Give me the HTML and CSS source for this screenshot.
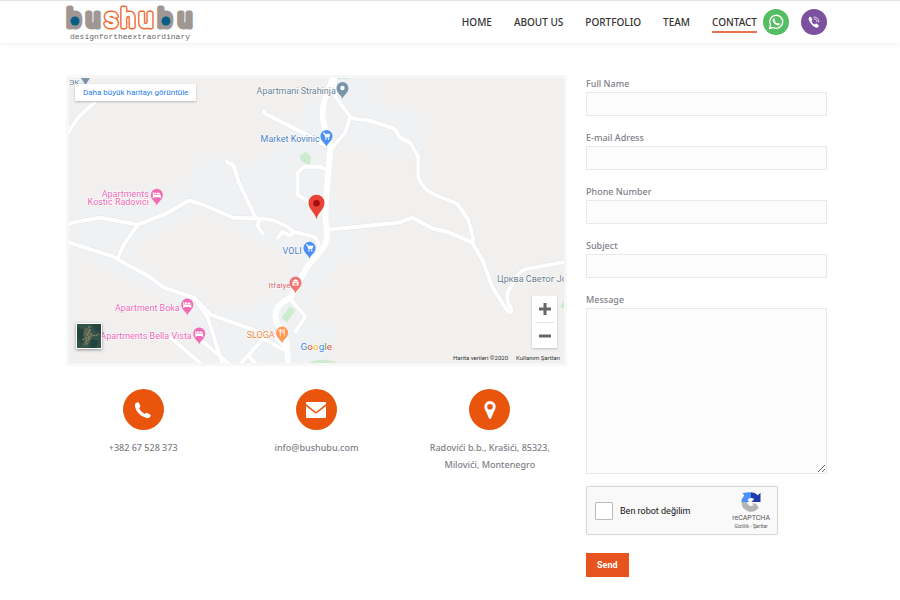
FILE: index.html
```html
<!DOCTYPE html>
<html lang="en">
<head>
<meta charset="utf-8">
<meta name="viewport" content="width=device-width, initial-scale=1">
<title>Contact - bushubu</title>
<link rel="stylesheet" href="styles.css">
</head>
<body>
<header class="site-header">
  <a class="logo" href="#" aria-label="bushubu">
    <svg viewBox="0 0 130 42" width="130" height="42">
      <g class="wordmark">
        <text class="wm-solid" y="26"><tspan x="1">b</tspan><tspan x="20">u</tspan></text>
        <text class="wm-outer" y="26"><tspan x="39">s</tspan><tspan x="55">h</tspan><tspan x="73">u</tspan></text>
        <text class="wm-inner" y="26"><tspan x="39">s</tspan><tspan x="55">h</tspan><tspan x="73">u</tspan></text>
        <text class="wm-solid" y="26"><tspan x="92">b</tspan><tspan x="112">u</tspan></text>
      </g>
      <circle cx="9" cy="20" r="4.500" fill="#075f86"/>
      <circle cx="100" cy="20" r="4.500" fill="#075f86"/>
      <text class="tagline" x="64" y="38" text-anchor="middle">designfortheextraordinary</text>
    </svg>
  </a>
  <nav class="nav">
    <a href="#">HOME</a>
    <a href="#">ABOUT US</a>
    <a href="#">PORTFOLIO</a>
    <a href="#">TEAM</a>
    <a class="active" href="#">CONTACT</a>
  </nav>
  <div class="social">
    <a href="#" aria-label="WhatsApp">
      <svg viewBox="0 0 26 26" width="26" height="26">
        <circle cx="13" cy="13" r="13" fill="#55bd62"/>
        <path d="M6.5 19.6l1-3.7a6.5 6.5 0 1 1 2.6 2.6z" fill="none" stroke="#fff" stroke-width="1.4" stroke-linejoin="round"/>
        <path d="M10.8 9.4c.5-.3.8 0 1 .5l.4 1c.1.4-.3.8-.6 1.2.7 1.2 1.500 1.900 2.700 2.400.4-.4.7-.9 1.100-.7l1.300.7c.4.3.1 1.200-.4 1.600-1.200.9-3.100.1-4.700-1.300-1.500-1.500-2.500-3.200-1.800-4.500.2-.4.6-.8 1-.9z" fill="#fff"/>
      </svg>
    </a>
    <a href="#" aria-label="Viber">
      <svg viewBox="0 0 26 26" width="26" height="26">
        <circle cx="13" cy="13" r="13" fill="#7d519f"/>
        <path d="M8.300 8.200c.8-.7 1.300-.5 1.900.3l1.100 1.600c.4.7 0 1.200-.7 1.800.4 1.700 1.500 2.900 3.200 3.500.6-.8 1.200-1 1.900-.6l1.600 1.100c.7.5.7 1.100.1 1.800-.8 1-1.600 1.200-2.700.7-3.200-1.500-5.400-4-6.700-7.200-.5-1.200-.5-2.200.3-3z" fill="#fff"/>
        <path d="M13 8c2.900 0 4.800 2 4.900 4.900M13.300 9.900c1.700.1 2.600 1.100 2.700 2.700" fill="none" stroke="#fff" stroke-width=".8" stroke-linecap="round"/>
      </svg>
    </a>
  </div>
</header>

<main class="page">
  <section class="info">
    <div class="map">
      <svg class="map-canvas" viewBox="68 78 496 286" preserveAspectRatio="xMidYMid slice">
        <defs>
          <path id="pin" d="M0 9C-1 5-6 3.500-6-2a6 6 0 0 1 12 0C6 3.500 1 5 0 9z"/>
          <g id="bed" fill="#fff"><path d="M-4-4.500h1v2.500h7v3.500h-1v-1h-6v1h-1z"/><path d="M-2.500-4h2.200v1.500h-2.200zM.2-4H2.500l1 1.500H.2z"/></g>
          <g id="cart"><path d="M-3.500-5h1.300l1.200 4.300h3.400l1.200-3h-5.300z" fill="#fff" stroke="#fff" stroke-width=".7"/><circle cx="-.6" cy="1" r=".8" fill="#fff"/><circle cx="2.200" cy="1" r=".8" fill="#fff"/></g>
          <g id="roads">
            <path class="wide" d="M333 76C329 90 323 96 322 113C322 127 330 140 330 147C329 165 325 193 325 220C327 233 328 239 323 248L307 267L290 298C279 304 275 308 275 316C274 328 286 331 286 345L288 366"/>
            <path d="M335 76L335 97L350 117C356 121 364 119 370 121L392 128C398 131 396 135 400 138L410 143L418 157L418 177C421 186 427 192 437 196L457 204L468 220L473 238L472 243"/>
            <path d="M350 117L345 132L332 148"/>
            <path d="M327 230L398 223L412 218L433 229L447 232L472 243L483 262L492 287L507 311Q512 315 511 309C506 302 507 297 508 292L517 277Q519 271 528 269L567 262"/>
            <path d="M263 111L265 114L307 135L325 146"/>
            <path d="M327 171L320 167L303 167L297 173L297 195L308 202"/>
            <path d="M226 162L233 166L238 182L255 218"/>
            <path d="M66 225L75 222L100 218L137 225L163 215L188 201L200 204L233 218L263 219L274 221L287 227L293 232L313 237Q321 243 317 253"/>
            <path d="M259 219L257 226L262 234M277 238L282 232L289 236L294 232"/>
            <path d="M66 242L112 257L150 278L163 288L193 298L210 315L243 327L274 337L284 347"/>
            <path d="M137 225L123 245L117 258M194 299L207 318L222 365"/>
            <path d="M170 338L202 366M202 342L230 366M240 364L264 338M247 356L257 366M263 339L282 350"/>
            <path d="M290 300L305 317L295 332M66 134L77 118L94 102"/>
          </g>
        </defs>
        <path class="land" d="M60 70h520v310H60z"/>
        <g class="plain">
          <path d="M66 203C120 220 190 196 195 164L201 155L226 155L240 166L270 151L298 125L318 76H378L380 105H412L430 130L418 158H385L365 145L340 150L332 163L330 190L348 215L365 235L363 258L340 262L312 295V312L338 333L320 366H66z"/>
        </g>
        <g class="land">
          <path d="M132 258L140 245L173 222L193 213L240 233L284 250L293 268L275 292L243 313L210 307L195 294L152 275z"/>
          <path d="M66 255L116 272L160 299L194 322L200 365H66zM187 212L203 208L228 221zM320 295L312 300L305 310L323 330z"/>
        </g>
        <g class="park"><path d="M299 156l6-4 6 5-2 8-8-3zM289 307l6 4-9 12-5-5zM309 363q10-5 25-1l3 4h-30zM560 307l6-10v14zM336 76h12v3h-12zM75 86l10-6-10 12z"/></g>
        <use href="#roads" class="road-edge"/>
        <use href="#roads" class="road"/>

        <g class="label">
          <text x="68" y="85" class="slate small">ЭК</text>
          <text x="256" y="94" class="slate">Apartmani Strahinja</text>
          <text x="260" y="142" class="shop">Market Kovinic</text>
          <text x="148" y="197" class="stay" text-anchor="end">Apartments</text>
          <text x="148" y="205" class="stay" text-anchor="end">Kostić Radovići</text>
          <text x="282" y="254" class="shop">VOLI</text>
          <text x="268" y="288" class="civic small">Itfaiye</text>
          <text x="497" y="282" class="slate">Црква Светог Јо</text>
          <text x="179" y="311" class="stay" text-anchor="end">Apartment Boka</text>
          <text x="191" y="340" class="stay" text-anchor="end">Apartments Bella Vista</text>
          <text x="246" y="339" class="food">SLOGA</text>
        </g>

        <path d="M80 78h9l-4.500 7z" fill="#7896a8"/>
        <g transform="translate(342 90)"><use href="#pin" fill="#7896a8"/><circle cy="-2" r="2.200" fill="#fff"/></g>
        <g transform="translate(326 138)"><use href="#pin" fill="#4a90f5"/><use href="#cart"/></g>
        <g transform="translate(309 250)"><use href="#pin" fill="#4a90f5"/><use href="#cart"/></g>
        <g transform="translate(156 197)"><use href="#pin" fill="#f06db5"/><use href="#bed"/></g>
        <g transform="translate(186.500 307)"><use href="#pin" fill="#f06db5"/><use href="#bed"/></g>
        <g transform="translate(198.500 336)"><use href="#pin" fill="#f06db5"/><use href="#bed"/></g>
        <g transform="translate(295 285)"><use href="#pin" fill="#f27573"/><path d="M-3.500-3L0-5.500 3.500-3zM-3-2.500h6V1h-6z" fill="#fff"/><path d="M-1.500-1.500h3v1.500h-3z" fill="#f27573"/></g>
        <g transform="translate(281.500 335)"><use href="#pin" fill="#ff9755"/><path d="M-1.700-2v4M-3.200-5.500v2.500q1.500 2 3 0v-2.500M-1.700-5.500v3M2.200 2v-7.500q-1.800 1-1.300 4h1.300" fill="none" stroke="#fff" stroke-width=".8"/></g>
        <path d="M316 219.500C315 213 308 210 308 203a8 8 0 0 1 16 0C324 210 317 213 316 219.500z" fill="#ea4335"/>
        <circle cx="316" cy="203.500" r="3.300" fill="#a50e0e"/>
        <text class="brand" x="300" y="351"><tspan fill="#4285f4">G</tspan><tspan fill="#ea4335">o</tspan><tspan fill="#fbbc05">o</tspan><tspan fill="#4285f4">g</tspan><tspan fill="#34a853">l</tspan><tspan fill="#ea4335">e</tspan></text>
      </svg>
      <a class="map-larger" href="#">Daha büyük haritayı görüntüle</a>
      <button class="map-sat" type="button" aria-label="Satellite">
        <svg viewBox="0 0 24 24" width="24" height="24">
          <path fill="#34514a" d="M0 0h24v24H0z"/>
          <path fill="#24443f" d="M0 3l7 3 2 7-4 6-5-4zM15 0h9v10l-6-4zM14 15l8 2-3 7h-6z"/>
          <path fill="#5a6550" d="M8 3l5 2 3 7-4 7-7 4 3-7-2-6z"/>
          <path fill="none" stroke="#92876c" stroke-width="1.300" stroke-dasharray="2 1" d="M12 2l1 5-3 3 3 4-4 3 1 5M13 10l5 2 4-2M10 14l-5 2"/>
        </svg>
      </button>
      <div class="map-zoom">
        <button type="button" aria-label="Zoom in"><svg viewBox="0 0 12 12" width="12" height="12"><path d="M6 0v12M0 6h12"/></svg></button>
        <button type="button" aria-label="Zoom out"><svg viewBox="0 0 12 12" width="12" height="12"><path d="M0 6h12"/></svg></button>
      </div>
      <div class="map-legal"><span>Harita verileri ©2020</span><a href="#">Kullanım Şartları</a></div>
    </div>

    <div class="contacts">
      <div class="contact">
        <span class="badge"><svg viewBox="0 0 20 20" width="20" height="20"><path d="M3.300 2.800c1.500-.9 2.300-.8 2.800.3l1.200 2.700c.3.8 0 1.400-1.200 2.200 1.200 2.700 3 4.600 5.800 6 .9-1.200 1.500-1.500 2.300-1.100l2.700 1.300c1 .5 1 1.300.2 2.500-.7 1.200-2.100 1.500-4 1C7.800 16.300 3.900 12.500 2.200 7.200 1.600 5.300 1.900 3.700 3.300 2.800z"/></svg></span>
        <p>+382 67 528 373</p>
      </div>
      <div class="contact">
        <span class="badge"><svg viewBox="0 0 22 18" width="22" height="18"><path d="M2 1h18q1 0 1 1v1L11 11 1 3V2q0-1 1-1zM1 5l8.500 6.700q1.500 1.200 3 0L21 5v11q0 1-1 1H2q-1 0-1-1z"/></svg></span>
        <p>info@bushubu.com</p>
      </div>
      <div class="contact">
        <span class="badge"><svg viewBox="0 0 12 18" width="12" height="18"><path fill-rule="evenodd" d="M6 0a5.700 5.700 0 0 1 5.700 5.700c0 2-1.200 3.800-2 5.400L7.200 17q-1.200 1.800-2.400 0L2.300 11.100C1.500 9.500.3 7.700.3 5.700A5.700 5.700 0 0 1 6 0zM6 2.900a2.800 2.800 0 1 0 0 5.600 2.800 2.800 0 0 0 0-5.600z"/></svg></span>
        <p>Radovići b.b., Krašići, 85323, Milovići, Montenegro</p>
      </div>
    </div>
  </section>

  <form class="form">
    <div class="field"><label for="name">Full Name</label><input id="name" type="text"></div>
    <div class="field"><label for="email">E-mail Adress</label><input id="email" type="email"></div>
    <div class="field"><label for="phone">Phone Number</label><input id="phone" type="tel"></div>
    <div class="field"><label for="subject">Subject</label><input id="subject" type="text"></div>
    <div class="field"><label for="message">Message</label><textarea id="message"></textarea></div>
    <div class="captcha">
      <input id="robot" type="checkbox">
      <label for="robot">Ben robot değilim</label>
      <div class="captcha-brand">
        <svg viewBox="0 0 20 20" width="20" height="20">
          <path fill="#4a90f5" d="M10 .3V6a4 4 0 0 0-3.500 2l1.800 2H.5A9.500 9.500 0 0 1 3.300 3.400L1.500 1.300C4 .6 7 .3 10 .3z"/>
          <path fill="#1c3aa9" d="M10 .3a9.500 9.500 0 0 1 6.800 3L19.500.8V10h-9l2.700-2.700A4 4 0 0 0 10 6z"/>
          <path fill="#b3b5b7" d="M.5 10H6a4.200 4.200 0 0 0 6.500 3.300L10.800 11.500h4l3 4A9.500 9.500 0 0 1 .5 10z"/>
        </svg>
        <span class="captcha-name">reCAPTCHA</span>
        <span class="captcha-links"><a href="#">Gizlilik</a> - <a href="#">Şartlar</a></span>
      </div>
    </div>
    <button class="send" type="submit">Send</button>
  </form>
</main>
</body>
</html>
```

FILE: styles.css
```css
* { box-sizing: border-box; }

body {
  margin: 0;
  background: #fff;
  color: #808088;
  font: 500 9px/17px "Noto Sans", sans-serif;
}

a { color: inherit; text-decoration: none; }
svg { display: block; }
button { padding: 0; border: 0; cursor: pointer; }

.site-header {
  display: flex;
  align-items: center;
  height: 43px;
  padding: 0 73px 0 66px;
  border-top: 1px solid #e2e2ea;
  box-shadow: 0 1px 6px rgba(0, 0, 0, .07);
}

.logo svg { overflow: visible; }
.wordmark {
  font: 400 25px "Liberation Sans", sans-serif;
  stroke-linejoin: round;
}
.wm-solid { fill: #a09694; stroke: #a09694; stroke-width: 5px; }
.wm-outer { fill: #ee6b35; stroke: #ee6b35; stroke-width: 5px; }
.wm-inner { fill: #fff; stroke: #fff; stroke-width: 2px; }
.tagline { font: 400 8px "Liberation Mono", monospace; fill: #66666c; }

.nav {
  display: flex;
  gap: 22px;
  margin: 2px 0 0 auto;
  color: #333;
  font-size: 10px;
  line-height: 18px;
}
.nav a { border-bottom: 2px solid transparent; }
.nav .active { border-color: #e9714d; }

.social { display: flex; gap: 12px; margin-left: 6px; }

.page {
  display: grid;
  grid-template-columns: minmax(0, 501fr) minmax(0, 241fr);
  gap: 19px;
  padding: 32px 73px 23px 66px;
}

.map {
  position: relative;
  border: 3px solid #f7f7f7;
}
.map-canvas { width: 100%; height: auto; }

.land { fill: #f1f0ef; }
.plain { fill: #eff1f3; }
.park { fill: #cdebcf; }
.road, .road-edge { fill: none; stroke-linecap: round; stroke-linejoin: round; }
.road { stroke: #fff; stroke-width: 4px; }
.road-edge { stroke: #e3e5e8; stroke-width: 5px; }
.wide { stroke-width: 6px; }

.label {
  font: 400 9px Roboto, sans-serif;
  stroke: #fff;
  stroke-width: 1px;
  paint-order: stroke;
}
.small { font-size: 8px; }
.slate { fill: #66808f; }
.shop { fill: #4a7fc4; }
.stay { fill: #ee68b4; }
.civic { fill: #d4696f; }
.food { fill: #ee8848; }
.brand { font: 400 10px Roboto, sans-serif; stroke: #fff; stroke-width: 1px; paint-order: stroke; }

.map-larger {
  position: absolute;
  top: 6px;
  left: 6px;
  padding: 0 8px;
  background: #fff;
  box-shadow: 0 1px 2px rgba(0, 0, 0, .25);
  color: #2a7de9;
  font: 400 8px/17px Roboto, sans-serif;
}
.map-sat {
  position: absolute;
  left: 7px;
  bottom: 14px;
  border: 1px solid #fff;
  box-shadow: 0 1px 3px rgba(0, 0, 0, .4);
}
.map-zoom {
  position: absolute;
  right: 7px;
  bottom: 15px;
  width: 25px;
  padding: 0 3px;
  background: #fff;
  box-shadow: 0 1px 2px rgba(0, 0, 0, .2);
}
.map-zoom button {
  display: grid;
  place-items: center;
  width: 100%;
  height: 26px;
  background: none;
}
.map-zoom button + button { border-top: 1px solid #e6e6e6; }
.map-zoom path { stroke: #666; stroke-width: 3px; }
.map-legal {
  position: absolute;
  right: 4px;
  bottom: 0;
  display: flex;
  gap: 8px;
  color: #333;
  font: 400 6px/10px Roboto, sans-serif;
}

.contacts {
  display: grid;
  grid-template-columns: repeat(3, 1fr);
  gap: 19px;
  margin-top: 23px;
}
.contact { text-align: center; }
.contact p { margin: 9px 0 0; }
.badge {
  display: grid;
  place-items: center;
  width: 41px;
  height: 41px;
  margin: 0 auto;
  border-radius: 50%;
  background: #e9550d;
  fill: #fff;
}

.field { margin-bottom: 13px; }
.field label { display: block; }
.field input,
.field textarea {
  display: block;
  width: 100%;
  height: 24px;
  padding: 4px 8px;
  border: 1px solid #e9e9e9;
  border-radius: 0;
  background: #fcfcfc;
  color: #555;
  font: inherit;
}
.field textarea { height: 166px; resize: vertical; }

.captcha {
  display: flex;
  align-items: center;
  width: 192px;
  height: 49px;
  margin-top: -1px;
  padding: 0 7px 0 8px;
  border: 1px solid #d8d8d8;
  border-radius: 2px;
  background: #f9f9f9;
  box-shadow: 0 0 2px rgba(0, 0, 0, .1);
  color: #111;
  font: 400 9px/12px Roboto, sans-serif;
}
.captcha input {
  appearance: none;
  width: 18px;
  height: 18px;
  margin: 0 7px 0 0;
  border: 1px solid #bbb;
  border-radius: 1px;
  background: #fff;
}
.captcha-brand {
  display: flex;
  flex-direction: column;
  align-items: center;
  margin-left: auto;
  color: #555;
}
.captcha-name { font-size: 7px; line-height: 12px; }
.captcha-links { font-size: 5px; line-height: 5px; }

.send {
  margin-top: 18px;
  padding: 0 11px;
  background: #e85420;
  color: #fff;
  font: 700 9px/24px Roboto, sans-serif;
}
```
